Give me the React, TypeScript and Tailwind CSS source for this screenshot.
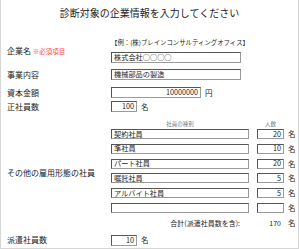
export default function App() {
  const others = [
    { type: "契約社員", count: "20" },
    { type: "準社員", count: "10" },
    { type: "パート社員", count: "20" },
    { type: "嘱託社員", count: "5" },
    { type: "アルバイト社員", count: "5" },
    { type: "", count: "" },
  ];

  const box =
    "border border-[#9a9a9a] border-t-[#555] border-l-[#555] bg-white text-[7.2px] leading-[8px] pb-[1px] flex items-center overflow-hidden whitespace-nowrap";

  return (
    <div className="w-[299px] h-[249px] bg-white border-x border-b border-[#d6d6d6] text-[#222] font-['Noto_Sans_CJK_JP',sans-serif]">
      {/* title */}
      <div className="h-[26px] flex items-center justify-center text-[10px] leading-[12px]">
        診断対象の企業情報を入力してください
      </div>

      {/* 企業名 */}
      <div className="mt-[12px] flex items-center">
        <div className="w-[110px] pl-[6px] text-[8px] leading-[10px]">
          企業名 <span className="text-[6.5px] text-[#ff4646]">※必須項目</span>
        </div>
        <div className="flex flex-col">
          <div className="h-[10px] text-[6.4px] leading-[10px] whitespace-nowrap">
            【例：(株)ブレインコンサルティングオフィス】
          </div>
          <div className={`mt-[4px] w-[130px] h-[11px] pl-[2px] ${box}`}>株式会社○○○○</div>
        </div>
      </div>

      {/* 事業内容 */}
      <div className="mt-[6px] flex items-center">
        <div className="w-[110px] pl-[6px] text-[8px] leading-[10px]">事業内容</div>
        <div className={`w-[130px] h-[11px] pl-[2px] ${box}`}>機械部品の製造</div>
      </div>

      {/* 資本金額 */}
      <div className="mt-[7px] flex items-center">
        <div className="w-[110px] pl-[6px] text-[8px] leading-[10px]">資本金額</div>
        <div className={`w-[90px] h-[11px] pr-[2px] justify-end ${box}`}>10000000</div>
        <span className="ml-[4px] text-[7.5px] leading-[10px]">円</span>
      </div>

      {/* 正社員数 */}
      <div className="mt-[3px] flex items-center">
        <div className="w-[110px] pl-[6px] text-[8px] leading-[10px]">正社員数</div>
        <div className={`w-[26px] h-[11px] pr-[2px] justify-end ${box}`}>100</div>
        <span className="ml-[4px] text-[7.5px] leading-[10px]">名</span>
      </div>

      {/* その他の雇用形態の社員 */}
      <div className="mt-[8px] flex items-center">
        <div className="w-[110px] pl-[6px] text-[8px] leading-[10px]">その他の雇用形態の社員</div>
        <div className="flex flex-col">
          <div className="h-[8px] flex text-[5.5px] leading-[8px] text-[#777]">
            <div className="w-[138px] text-center">社員の種別</div>
            <div className="ml-[8px] w-[27px] text-center">人数</div>
          </div>
          <div className="mt-[1px] flex flex-col gap-[4.8px]">
            {others.map((o, i) => (
              <div key={i} className="flex items-center">
                <div className={`w-[138px] h-[10px] pl-[2px] ${box}`}>{o.type}</div>
                <div className={`ml-[8px] w-[27px] h-[10px] pr-[2px] justify-end ${box}`}>{o.count}</div>
                <span className="ml-[4px] text-[7.5px] leading-[10px]">名</span>
              </div>
            ))}
          </div>
          <div className="mt-[6px] h-[8px] flex items-center text-[7px] leading-[8px]">
            <div className="w-[138px] text-right pr-[9px]">合計(派遣社員数を含):</div>
            <div className="ml-[8px] w-[27px] text-right pr-[3px]">170</div>
            <span className="ml-[4px] text-[7.5px]">名</span>
          </div>
        </div>
      </div>

      {/* 派遣社員数 */}
      <div className="mt-[8px] flex items-center">
        <div className="w-[110px] pl-[6px] text-[8px] leading-[10px]">派遣社員数</div>
        <div className={`w-[26px] h-[11px] pr-[2px] justify-end ${box}`}>10</div>
        <span className="ml-[4px] text-[7.5px] leading-[10px]">名</span>
      </div>
    </div>
  );
}
